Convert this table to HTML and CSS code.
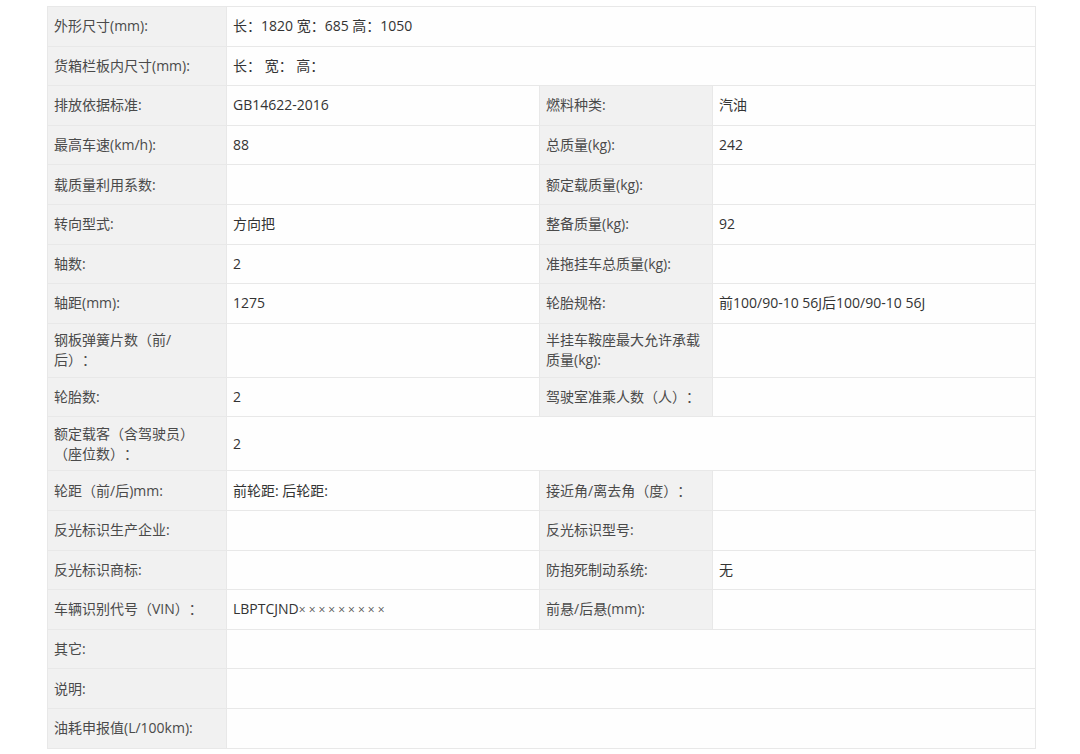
FILE: index.html
```html
<!DOCTYPE html>
<html lang="zh-CN">
<head>
<meta charset="utf-8">
<title>车辆参数</title>
<link rel="stylesheet" href="styles.css">
</head>
<body>
<div class="page">
  <table class="spec">
    <colgroup>
      <col class="c1"><col class="c2"><col class="c3"><col class="c4">
    </colgroup>
    <tbody>
      <tr><th class="lab">外形尺寸(mm):</th><td class="val" colspan="3">长：1820 宽：685 高：1050</td></tr>
      <tr><th class="lab">货箱栏板内尺寸(mm):</th><td class="val" colspan="3">长：&nbsp;宽：&nbsp;高：</td></tr>
      <tr><th class="lab">排放依据标准:</th><td class="val">GB14622-2016</td><th class="lab">燃料种类:</th><td class="val">汽油</td></tr>
      <tr><th class="lab">最高车速(km/h):</th><td class="val">88</td><th class="lab">总质量(kg):</th><td class="val">242</td></tr>
      <tr><th class="lab">载质量利用系数:</th><td class="val"></td><th class="lab">额定载质量(kg):</th><td class="val"></td></tr>
      <tr><th class="lab">转向型式:</th><td class="val">方向把</td><th class="lab">整备质量(kg):</th><td class="val">92</td></tr>
      <tr><th class="lab">轴数:</th><td class="val">2</td><th class="lab">准拖挂车总质量(kg):</th><td class="val"></td></tr>
      <tr><th class="lab">轴距(mm):</th><td class="val">1275</td><th class="lab">轮胎规格:</th><td class="val">前100/90-10 56J后100/90-10 56J</td></tr>
      <tr class="tall"><th class="lab">钢板弹簧片数（前/<br>后）：</th><td class="val"></td><th class="lab">半挂车鞍座最大允许承载<br>质量(kg):</th><td class="val"></td></tr>
      <tr><th class="lab">轮胎数:</th><td class="val">2</td><th class="lab">驾驶室准乘人数（人）：</th><td class="val"></td></tr>
      <tr class="tall"><th class="lab">额定载客（含驾驶员）<br>（座位数）：</th><td class="val" colspan="3">2</td></tr>
      <tr><th class="lab">轮距（前/后)mm:</th><td class="val">前轮距: 后轮距:</td><th class="lab">接近角/离去角（度）：</th><td class="val"></td></tr>
      <tr><th class="lab">反光标识生产企业:</th><td class="val"></td><th class="lab">反光标识型号:</th><td class="val"></td></tr>
      <tr><th class="lab">反光标识商标:</th><td class="val"></td><th class="lab">防抱死制动系统:</th><td class="val">无</td></tr>
      <tr><th class="lab">车辆识别代号（VIN）：</th><td class="val">LBPTCJND<span class="mask">×××××××××</span></td><th class="lab">前悬/后悬(mm):</th><td class="val"></td></tr>
      <tr><th class="lab">其它:</th><td class="val" colspan="3"></td></tr>
      <tr><th class="lab">说明:</th><td class="val" colspan="3"></td></tr>
      <tr><th class="lab">油耗申报值(L/100km):</th><td class="val" colspan="3"></td></tr>
    </tbody>
  </table>
</div>
</body>
</html>
```

FILE: styles.css
```css
html, body {
  margin: 0;
  padding: 0;
  background: #ffffff;
}

.page {
  padding: 6px 0 0 47px;
}

.spec {
  border-collapse: collapse;
  table-layout: fixed;
  width: 988px;
  font-family: "Open Sans", "Noto Sans CJK SC", sans-serif;
  font-size: 14px;
  line-height: 20px;
  color: #3a3a3a;
  text-spacing-trim: space-all;
  white-space: nowrap;
}

.c1 { width: 179px; }
.c2 { width: 313px; }
.c3 { width: 173px; }
.c4 { width: 323px; }

.spec tr {
  height: 39.6px;
}

.spec tr.tall {
  height: 54px;
}

.spec th,
.spec td {
  border: 1px solid #e8e8e8;
  vertical-align: middle;
  text-align: left;
  font-weight: normal;
  padding: 0 6px 0 6px;
  overflow: hidden;
}

.lab {
  background: #f1f1f1;
  color: #4a4a4a;
}

.val {
  background: #fefefe;
  color: #333333;
}

.mask {
  font-size: 12px;
  letter-spacing: 3px;
  color: #555555;
}
```
